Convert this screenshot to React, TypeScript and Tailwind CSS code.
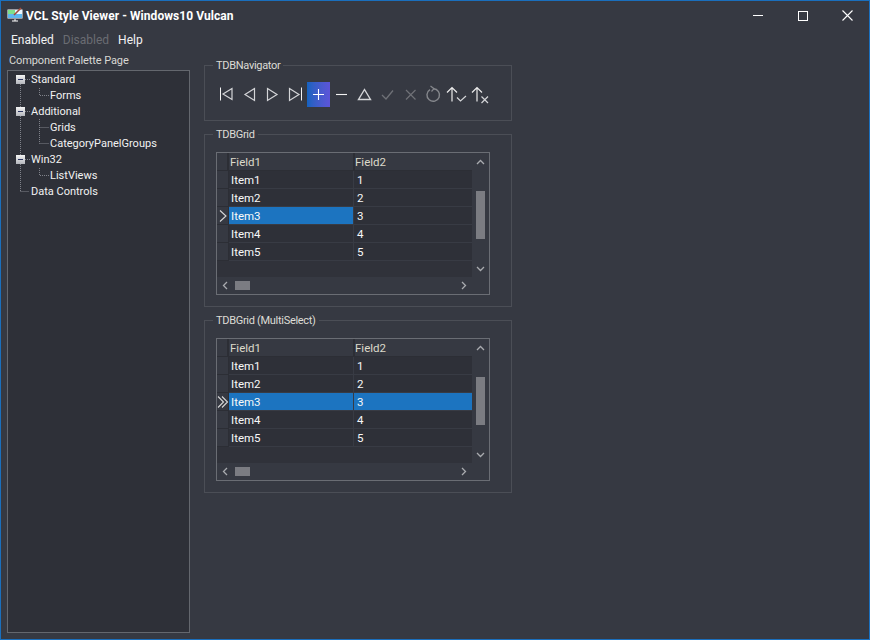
import type { ReactNode } from 'react';

const rows = [
  ['Item1', '1'],
  ['Item2', '2'],
  ['Item3', '3'],
  ['Item4', '4'],
  ['Item5', '5'],
];

const tree = [
  { label: 'Standard', child: false },
  { label: 'Forms', child: true },
  { label: 'Additional', child: false },
  { label: 'Grids', child: true },
  { label: 'CategoryPanelGroups', child: true },
  { label: 'Win32', child: false },
  { label: 'ListViews', child: true },
  { label: 'Data Controls', child: false },
];

function NavIcon({ children, active }: { children: ReactNode; active?: boolean }) {
  return (
    <div className={active ? 'w-[23px] h-[25px] bg-gradient-to-r from-[#1262bf] to-[#5c54d9]' : 'w-[23px] h-[25px]'}>
      <svg width="23" height="25" viewBox="0 0 23 25" fill="none" className="overflow-visible">
        {children}
      </svg>
    </div>
  );
}

function Navigator() {
  const on = '#d4d5d8';
  const off = '#6f7177';
  return (
    <div className="flex ml-[10px] mt-[16px]">
      <NavIcon>
        <path d="M5.5 5.5V18.5" stroke="#f2f2f2" />
        <path d="M17 6.5L8 12L17 17.5Z" stroke={on} strokeWidth="1.2" />
      </NavIcon>
      <NavIcon>
        <path d="M16.5 6.5L7 12.5L16.5 18.5Z" stroke={on} strokeWidth="1.2" />
      </NavIcon>
      <NavIcon>
        <path d="M6.5 6.5L16 12.5L6.5 18.5Z" stroke={on} strokeWidth="1.2" />
      </NavIcon>
      <NavIcon>
        <path d="M5.5 6.5L15 12.5L5.5 18.5Z" stroke={on} strokeWidth="1.2" />
        <path d="M17.5 5.5V18.5" stroke="#f2f2f2" />
      </NavIcon>
      <NavIcon active>
        <path d="M6 12.5H17M11.5 7V18" stroke="#ffffff" strokeWidth="1.1" />
      </NavIcon>
      <NavIcon>
        <path d="M6 12.5H17" stroke="#f2f2f2" strokeWidth="1.1" />
      </NavIcon>
      <NavIcon>
        <path d="M11.5 7.5L17.5 17.5H5.5Z" stroke={on} strokeWidth="1.4" />
      </NavIcon>
      <NavIcon>
        <path d="M6 13L10 17L17 8.5" stroke={off} strokeWidth="1.3" />
      </NavIcon>
      <NavIcon>
        <path d="M7 8L16.5 17.5M16.5 8L7 17.5" stroke={off} strokeWidth="1.2" />
      </NavIcon>
      <NavIcon>
        <path d="M8 7.6A6.3 6.3 0 1 0 11.5 6.7" stroke="#85878c" strokeWidth="1.4" />
        <path d="M8.5 4L12 6.7L9.5 9.5" stroke="#85878c" strokeWidth="1.2" />
      </NavIcon>
      <NavIcon>
        <path d="M7 5.5V19.5M2 10.5L7 5.5L12 10.5" stroke="#ececec" strokeWidth="1.2" />
        <path d="M12 15.5L15.5 19L21 14" stroke="#d4d5d8" strokeWidth="1.2" />
      </NavIcon>
      <NavIcon>
        <path d="M9 5.5V19.5M4 10.5L9 5.5L14 10.5" stroke="#ececec" strokeWidth="1.2" />
        <path d="M13.5 14.5L20 21M20 14.5L13.5 21" stroke="#d4d5d8" strokeWidth="1.2" />
      </NavIcon>
    </div>
  );
}

function Chevron({ d }: { d: string }) {
  return (
    <svg width="9" height="9" viewBox="0 0 9 9" fill="none">
      <path d={d} stroke="#a9abaf" strokeWidth="1.3" />
    </svg>
  );
}

function DataGrid({ multi }: { multi?: boolean }) {
  return (
    <div className="ml-[11px] mt-[17px] w-[274px] h-[143px] border border-[#6a6d74] flex flex-col text-[11.5px]">
      <div className="flex h-[124px]">
        <div className="w-[255px] bg-[#30323a] flex flex-col">
          <div className="flex h-[18px] bg-[#363942] text-[#dcdacb]">
            <div className="w-[12px] border-r-2 border-b border-[#2c2e35]" />
            <div className="w-[124px] pl-[1px] border-b border-[#2c2e35] leading-[18px]">Field1</div>
            <div className="w-[119px] border-l-2 border-b border-[#2c2e35] leading-[18px]">Field2</div>
          </div>
          {rows.map((r, i) => {
            const current = i === 2;
            return (
              <div key={r[0]} className="flex h-[18px] text-[#f8f8f8]">
                <div className="w-[12px] bg-[#363942] border-r border-b border-[#2c2e35] flex items-center">
                  {current && (
                    <svg width="12" height="14" viewBox="0 0 12 14" fill="none" className="overflow-visible">
                      {multi && <path d="M1 1.5L6.5 7L1 12.5" stroke="#d8d8d8" strokeWidth="1.1" />}
                      <path d={multi ? 'M5 1.5L10.5 7L5 12.5' : 'M3 1.5L9 7L3 12.5'} stroke="#d8d8d8" strokeWidth="1.1" />
                    </svg>
                  )}
                </div>
                <div className={current ? 'w-[124px] pl-[2px] border-b border-[#383b44] bg-[#1c74c0] leading-[19px]' : 'w-[124px] pl-[2px] border-b border-[#383b44] bg-[#2e3038] leading-[19px]'}>
                  {r[0]}
                </div>
                <div className={current && multi ? 'w-[119px] pl-[3px] border-l border-b border-[#383b44] bg-[#1c74c0] leading-[19px]' : 'w-[119px] pl-[3px] border-l border-b border-[#383b44] bg-[#2e3038] leading-[19px]'}>
                  {r[1]}
                </div>
              </div>
            );
          })}
        </div>
        <div className="w-[17px] flex flex-col items-center">
          <div className="h-[18px] flex items-center justify-center">
            <Chevron d="M1 6L4.5 2.5L8 6" />
          </div>
          <div className="mt-[20px] w-[9px] h-[48px] bg-[#7b7c82]" />
          <div className="mt-auto h-[18px] flex items-center justify-center">
            <Chevron d="M1 3L4.5 6.5L8 3" />
          </div>
        </div>
      </div>
      <div className="flex flex-1 items-center pl-[4px]">
        <Chevron d="M6 1L2.5 4.5L6 8" />
        <div className="ml-[5px] w-[15px] h-[9px] bg-[#7b7c82]" />
        <div className="ml-auto mr-[21px]">
          <Chevron d="M3 1L6.5 4.5L3 8" />
        </div>
      </div>
    </div>
  );
}

function Group({ title, children, height }: { title: string; children: ReactNode; height: string }) {
  return (
    <div className={`relative w-[308px] border border-[#4b4e56] ${height}`}>
      <span className="absolute left-[8px] top-[-8px] px-[3px] bg-[#363942] leading-[16px] tracking-[-0.3px] text-[#dddcd6]">{title}</span>
      {children}
    </div>
  );
}

export default function App() {
  return (
    <div
      className="w-[870px] h-[640px] bg-[#363942] border border-[#1a6fbd] flex flex-col text-[11px] text-[#e6e6e6] overflow-hidden"
      style={{ fontFamily: 'Roboto, "Noto Sans", sans-serif' }}
    >
      {/* title bar */}
      <div className="h-[29px] flex items-center shrink-0">
        <svg width="17" height="15" viewBox="0 0 17 15" className="ml-[6px] mt-[-2px]">
          <rect x="0.5" y="2.5" width="15" height="9" fill="#ffffff" />
          <rect x="1" y="3" width="7" height="4" fill="#7fe08a" />
          <rect x="8" y="3" width="7" height="4" fill="#e8f6ff" />
          <rect x="1" y="7" width="14" height="4" fill="#5cb7ef" />
          <path d="M5 14H11M8 12V14" stroke="#ffffff" />
          <path d="M7 8L14 1" stroke="#a34a3a" strokeWidth="1.6" />
        </svg>
        <span className="ml-[2px] text-[12px] font-bold tracking-[0.05px] text-white">VCL Style Viewer - Windows10 Vulcan</span>
        <div className="ml-auto flex">
          <div className="w-[44px] h-[29px] flex items-center justify-center">
            <div className="w-[10px] h-[1px] bg-white mr-[2px]" />
          </div>
          <div className="w-[44px] h-[29px] flex items-center justify-center">
            <div className="w-[10px] h-[10px] border border-white" />
          </div>
          <div className="w-[44px] h-[29px] flex items-center justify-center">
            <svg width="11" height="11" viewBox="0 0 11 11">
              <path d="M0.5 0.5L10.5 10.5M10.5 0.5L0.5 10.5" stroke="#ffffff" strokeWidth="1.1" />
            </svg>
          </div>
        </div>
      </div>
      {/* menu */}
      <div className="h-[20px] flex items-center pl-[10px] gap-[9px] shrink-0 text-[12px]">
        <span className="text-[#f2f2f2]">Enabled</span>
        <span className="text-[#6a6c72]">Disabled</span>
        <span className="text-[#f2f2f2]">Help</span>
      </div>
      <div className="flex flex-1 min-h-0">
        <div className="w-[196px] pl-[6px] flex flex-col shrink-0">
          <div className="pl-[2px] h-[20px] leading-[21px] tracking-[-0.1px] text-[#d8d8d4]">Component Palette Page</div>
          <div className="relative w-[183px] h-[563px] border border-[#64676e] bg-[#2e3038]">
            <svg width="60" height="130" className="absolute left-0 top-0" fill="none">
              <path d="M12.5 13V120M12.5 120.5H21M17 8.5H22M31.5 17V24.5H41M17 40.5H22M31.5 48V72.5M31.5 56.5H41M31.5 72.5H41M17 88.5H22M31.5 97V104.5H41" stroke="#80828a" strokeDasharray="1 1" />
            </svg>
            {tree.map((t) => (
              <div key={t.label} className="relative h-[16px] leading-[17px] text-[#f2f2f2]">
                {!t.child && t.label !== 'Data Controls' && (
                  <div className="absolute left-[8px] top-[4px] w-[9px] h-[9px] bg-gradient-to-b from-[#f4f4f4] to-[#b4b6bc] flex items-center justify-center">
                    <div className="w-[5px] h-[1px] bg-[#2c3560]" />
                  </div>
                )}
                <span className={t.child ? 'ml-[42px]' : 'ml-[23px]'}>{t.label}</span>
              </div>
            ))}
          </div>
        </div>
        <div className="flex flex-col gap-[13px] ml-[7px] pt-[15px]">
          <Group title="TDBNavigator" height="h-[56px]">
            <Navigator />
          </Group>
          <Group title="TDBGrid" height="h-[173px]">
            <DataGrid />
          </Group>
          <Group title="TDBGrid (MultiSelect)" height="h-[173px]">
            <DataGrid multi />
          </Group>
        </div>
      </div>
    </div>
  );
}
